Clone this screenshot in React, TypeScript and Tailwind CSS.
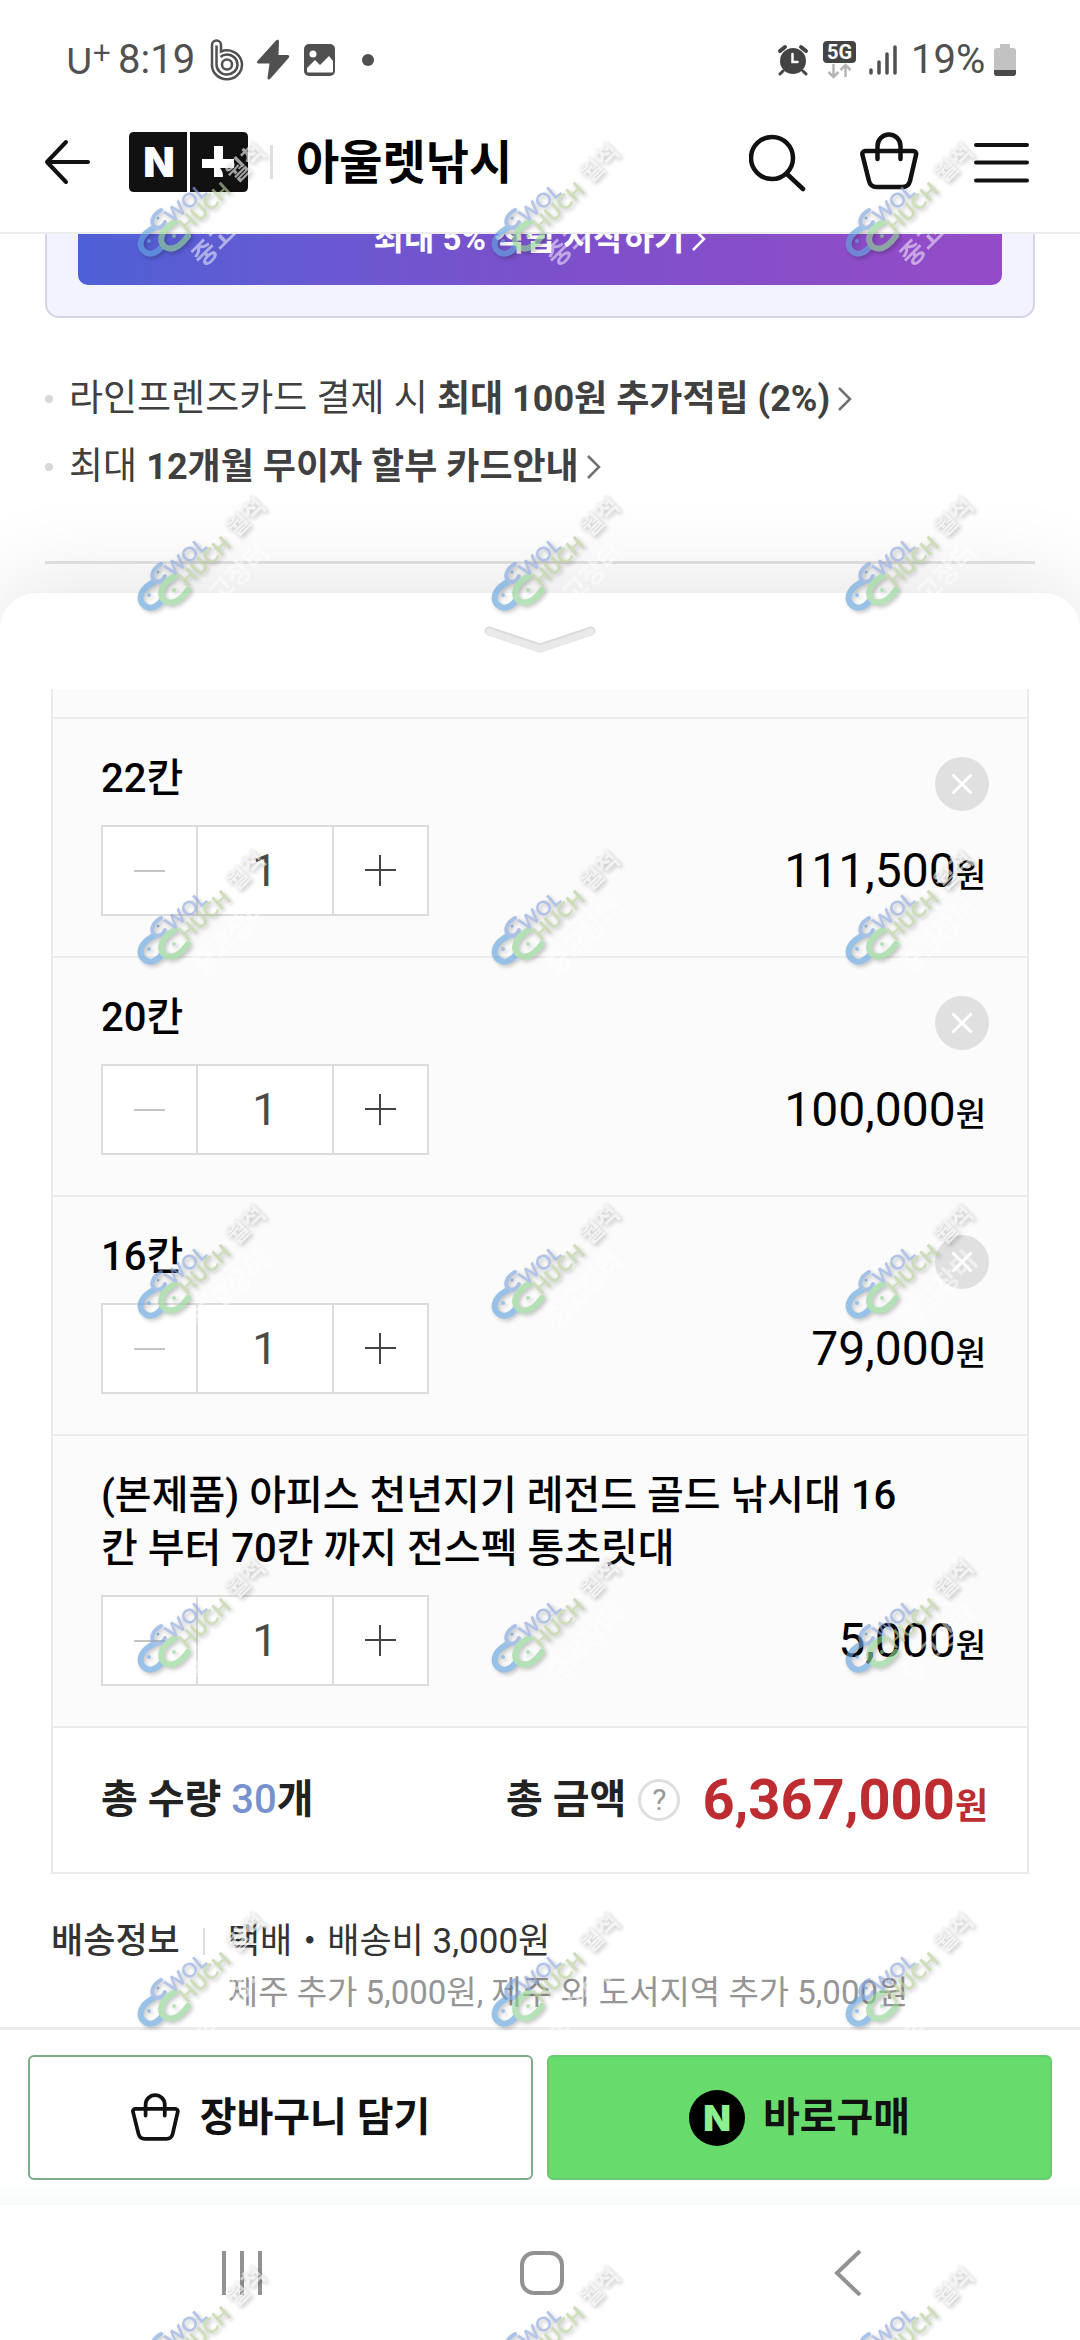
import React, { useState } from "react";

interface Item {
  name: string;
  price: string;
  removable: boolean;
}

const ITEMS: Item[] = [
  { name: "22칸", price: "111,500", removable: true },
  { name: "20칸", price: "100,000", removable: true },
  { name: "16칸", price: "79,000", removable: true },
  {
    name: "(본제품) 아피스 천년지기 레전드 골드 낚시대 16칸 부터 70칸 까지 전스펙 통초릿대",
    price: "5,000",
    removable: false,
  },
];

export default function App() {
  return (
    <div className="relative flex min-h-screen flex-col overflow-hidden bg-white font-[Roboto,'Noto_Sans_CJK_KR',sans-serif] text-black">
      <div className="relative z-10 border-b-2 border-[#ececec] bg-white">
        <StatusBar />
        <Header />
      </div>
      <Benefits />
      <OrderSheet />
      <BuyBar />
      <SystemNav />
      <Watermarks />
    </div>
  );
}

// ----------------- Status bar -----------------
const StatusBar = () => (
  <div className="flex h-[120px] items-center justify-between pr-[64px] pl-[66px] text-[40px] leading-none text-[#505050]">
    <div className="flex items-center">
      <span className="flex w-[52px] items-start font-[Lato,sans-serif] text-[36px]">
        U<span className="text-[32px] leading-[20px]">+</span>
      </span>
      <span className="w-[92px]">8:19</span>
      <svg className="h-[42px] w-[34px]" viewBox="0 0 34 42" fill="none" stroke="#505050" strokeWidth="2.500">
        <path d="M2 25V6a4.500 4.500 0 0 1 9 0v6.500A15 14.500 0 1 1 2 25z" />
        <path d="M6.500 25V6.500M6.500 25a10.500 10 0 1 0 10.500-9.500c-3 0-5 1-6.500 2.500" />
        <circle cx="17" cy="25.500" r="5" />
      </svg>
      <svg className="ml-[12px] h-[42px] w-[34px]" viewBox="0 0 34 42" fill="#505050">
        <path d="M20 1.500 1.500 22c-1 1.500-.5 2.500 1 2.500h11L11.500 39c0 2 2 2 3 .5L33 18.500c.8-1.500 0-2.500-1.500-2.500h-9L23 2.500C23 .5 21 .3 20 1.500z" />
      </svg>
      <svg className="ml-[14px] h-[34px] w-[32px]" viewBox="0 0 32 34">
        <rect x="0" y="1" width="31" height="32" rx="5" fill="#505050" />
        <circle cx="9" cy="11" r="3.500" fill="#fff" />
        <path d="M3 25l8-8 5 5 9-9 4 5v10q0 1.500-1.500 1.500h-23Q3 29.500 3 28z" fill="#fff" />
      </svg>
      <span className="ml-[26px] h-[12px] w-[12px] rounded-full bg-[#505050]" />
    </div>
    <div className="flex items-center">
      <svg className="h-[32px] w-[32px]" viewBox="0 0 32 32" fill="none" stroke="#444" strokeLinecap="round">
        <circle cx="16" cy="17" r="13" fill="#444" stroke="none" />
        <path d="M3 7l5-4M29 7l-5-4" strokeWidth="4" />
        <path d="M6 27l-3 3M26 27l3 3" strokeWidth="3" />
        <path d="M15.500 10v8h5" stroke="#fff" strokeWidth="2.500" />
      </svg>
      <svg className="ml-[14px] h-[40px] w-[34px]" viewBox="0 0 34 40">
        <rect x="0" y="1" width="33" height="22" rx="4" fill="#444" />
        <text x="16.500" y="19" textAnchor="middle" fill="#fff" fontFamily="Roboto" fontSize="20" fontWeight="700">
          5G
        </text>
        <path d="M10.500 24v13M5.500 32l5 5 5-5M22.500 37V25M17.500 30l5-5 5 5" fill="none" stroke="#b5b5b5" strokeWidth="2.500" />
      </svg>
      <svg className="ml-[12px] h-[32px] w-[28px]" viewBox="0 0 28 32" stroke="#505050" strokeWidth="3.500" strokeLinecap="round">
        <path d="M2 26v3M10 18v11M18 10v19M26 3v26" />
      </svg>
      <span className="ml-[14px] w-[83px]">19%</span>
      <svg className="h-[34px] w-[22px]" viewBox="0 0 22 34">
        <path d="M6 1h10v4h3q3 0 3 3v22q0 3-3 3H3q-3 0-3-3V8q0-3 3-3h3z" fill="#c2c2c2" />
        <path d="M0 27h22v3q0 3-3 3H3q-3 0-3-3z" fill="#4a4a4a" />
      </svg>
    </div>
  </div>
);

// ----------------- Store header -----------------
const Header = () => (
  <header className="flex h-[112px] items-center pr-[49px] pb-[28px] pl-[44px]">
    <button aria-label="뒤로">
      <svg className="h-[46px] w-[48px]" viewBox="0 0 48 46" fill="none" stroke="#111" strokeWidth="4" strokeLinecap="round" strokeLinejoin="round">
        <path d="M22 3 3 23l19 20M3 23h41" />
      </svg>
    </button>
    <a href="#store" aria-label="N+ 스토어" className="ml-[37px]">
      <svg className="h-[60px] w-[119px]" viewBox="0 0 119 60">
        <path d="M5 0h53v60H5q-5 0-5-5V5q0-5 5-5zM61 0h53q5 0 5 5v50q0 5-5 5H61z" fill="#111" />
        <text x="30" y="45" textAnchor="middle" fill="#fff" fontFamily="Inter" fontSize="41" fontWeight="900">
          N
        </text>
        <path d="M85 14h9v13h11v9H91q3 3 3 9h-9v-9H73v-9h12z" fill="#fff" />
      </svg>
    </a>
    <span className="ml-[22px] h-[34px] w-[3px] bg-[#dfdfdf]" />
    <h1 className="ml-[23px] text-[47px] leading-none font-bold">아울렛낚시</h1>
    <div className="ml-auto flex gap-[51px]">
      <button aria-label="검색">
        <svg className="h-[60px] w-[60px]" viewBox="0 0 60 60" fill="none" stroke="#111" strokeWidth="4.500" strokeLinecap="round">
          <circle cx="23" cy="26" r="21" />
          <path d="M38 42l16 15" />
        </svg>
      </button>
      <button aria-label="장바구니">
        <BasketIcon className="h-[60px] w-[60px]" />
      </button>
      <button aria-label="메뉴">
        <svg className="h-[60px] w-[60px]" viewBox="0 0 60 60" stroke="#111" strokeWidth="4" strokeLinecap="round">
          <path d="M5 13h51M5 30.500h51M5 48.500h51" />
        </svg>
      </button>
    </div>
  </header>
);

const BasketIcon = ({ className }: { className: string }) => (
  <svg className={className} viewBox="0 0 60 60" fill="none" stroke="#111" strokeWidth="4.500" strokeLinecap="round" strokeLinejoin="round">
    <path d="M5 19h48a3 3 0 0 1 3 4l-6 26q-1.500 6-7.500 6h-26q-6 0-7.500-6L2.500 23a3 3 0 0 1 2.500-4z" />
    <path d="M17.500 27V14a11.500 11.500 0 0 1 23 0v13" />
  </svg>
);

const Chevron = ({ className }: { className: string }) => (
  <svg className={className} viewBox="0 0 14 24" fill="none" stroke="currentColor" strokeWidth="2.500">
    <path d="M1 1l11 11L1 23" />
  </svg>
);

// ----------------- Card benefits, scrolled under the header -----------------
const Benefits = () => (
  <section className="px-[45px] pb-[29px] text-[#404040]">
    <div className="-mt-[61px] rounded-[14px] border-2 border-[#d3d5e2] bg-[#f2f3fe] px-[31px] pb-[31px]">
      <button className="flex h-[110px] w-full items-center justify-center gap-[8px] rounded-[10px] bg-linear-to-r from-[#4e60d6] via-[#7b50cb] to-[#954bc7] pt-[18px] text-[33px] font-bold text-white">
        최대 5% 적립 시작하기
        <Chevron className="h-[24px] w-[14px]" />
      </button>
    </div>
    <ul className="mt-[47px] leading-[67px]">
      <li className="flex items-center">
        <span className="mr-[16px] h-[8px] w-[8px] rounded-full bg-[#d8d8d8]" />
        <a href="#card" className="flex items-center gap-[8px]">
          <span className="text-[37px]">
            라인프렌즈카드 결제 시 <b className="text-[36px]">최대 100원 추가적립 (2%)</b>
          </span>
          <Chevron className="h-[24px] w-[14px] text-[#707070]" />
        </a>
      </li>
      <li className="flex items-center">
        <span className="mr-[16px] h-[8px] w-[8px] rounded-full bg-[#d8d8d8]" />
        <a href="#installment" className="flex items-center gap-[8px]">
          <span className="text-[37px]">
            최대 <b className="text-[36px]">12개월 무이자 할부 카드안내</b>
          </span>
          <Chevron className="h-[24px] w-[14px] text-[#707070]" />
        </a>
      </li>
    </ul>
    <hr className="mt-[60px] border-t-3 border-[#e4e4e4]" />
  </section>
);

// ----------------- Order sheet -----------------
const OrderSheet = () => (
  <section className="relative flex-1 rounded-t-[36px] bg-white px-[51px] shadow-[0_0_100px_rgba(0,0,0,0.13)]">
    <button aria-label="접기" className="mx-auto block pt-[33px]">
      <svg className="h-[30px] w-[112px]" viewBox="0 0 112 30" fill="none" strokeLinecap="round" strokeLinejoin="round">
        <path d="M5 5l51 17 51-17" stroke="#dcdcdc" strokeWidth="9" />
        <path d="M5 6l51 17 51-17" stroke="#e9e9e9" strokeWidth="7" />
      </svg>
    </button>
    <div className="mt-[33px] border-2 border-t-0 border-[#ebebeb]">
      <div className="h-[28px] bg-[#fbfbfb]" />
      {ITEMS.map((item) => (
        <ItemRow key={item.name} item={item} />
      ))}
      <div className="flex h-[146px] items-center justify-between border-t-2 border-[#ebebeb] pr-[39px] pl-[48px] text-[40px] leading-none font-bold text-[#222]">
        <span>
          총 수량 <span className="font-medium text-[#7891cf]">30</span>개
        </span>
        <span className="flex items-center">
          총 금액
          <button aria-label="총 금액 안내" className="ml-[12px] h-[42px] w-[42px] rounded-full border-3 border-[#dedede] text-[30px] leading-none font-normal text-[#999]">
            ?
          </button>
          <span className="ml-[22px] text-[56px] font-bold text-[#bd2c30]">
            6,367,000<span className="text-[36px]">원</span>
          </span>
        </span>
      </div>
    </div>
    <div className="flex items-start pt-[42px] pb-[9px] text-[35px] leading-[51px] text-[#333]">
      <span className="font-medium">배송정보</span>
      <span className="mx-[23px] mt-[12px] h-[27px] w-[2px] bg-[#dcdcdc]" />
      <div>
        <p>택배・배송비 3,000원</p>
        <p className="text-[33px] text-[#959595]">제주 추가 5,000원, 제주 외 도서지역 추가 5,000원</p>
      </div>
    </div>
  </section>
);

const ItemRow = ({ item }: { item: Item }) => {
  const [count, setCount] = useState(1);

  return (
    <div className="border-t-2 border-[#ebebeb] bg-[#fbfbfb] pt-[33px] pr-[38px] pb-[40px] pl-[48px]">
      <div className="flex items-start justify-between gap-[20px]">
        <p className="text-[40px] leading-[53px] font-medium">{item.name}</p>
        <div className="h-[53px] w-[54px] shrink-0 pt-[5px]">
          {item.removable && (
            <button aria-label="삭제" className="flex h-[54px] w-[54px] items-center justify-center rounded-full bg-[#e0e0e0]">
              <svg className="h-[22px] w-[22px]" viewBox="0 0 22 22" stroke="#fff" strokeWidth="3">
                <path d="M1.500 1.500l19 19M20.500 1.500l-19 19" />
              </svg>
            </button>
          )}
        </div>
      </div>
      <div className="mt-[20px] flex items-center justify-between">
        <div className="flex h-[91px] border-2 border-[#dcdcdc] bg-white">
          <button aria-label="수량 빼기" onClick={() => setCount(Math.max(1, count - 1))} className="flex w-[93px] items-center justify-center">
            <span className="h-[2px] w-[31px] bg-[#c4c4c4]" />
          </button>
          <input
            aria-label={`${item.name} 수량`}
            value={count}
            readOnly
            className="w-[138px] border-x-2 border-[#dcdcdc] text-center text-[45px] text-[#4a4a4a]"
          />
          <button aria-label="수량 더하기" onClick={() => setCount(count + 1)} className="flex w-[93px] items-center justify-center">
            <svg className="h-[32px] w-[32px]" viewBox="0 0 32 32" stroke="#444" strokeWidth="2">
              <path d="M0 15h31M15 0v31" />
            </svg>
          </button>
        </div>
        <span className="pr-[3px] text-[48px] leading-none">
          {item.price}
          <span className="text-[33px] font-medium">원</span>
        </span>
      </div>
    </div>
  );
};

// ----------------- Cart / buy buttons -----------------
const BuyBar = () => (
  <div className="relative flex gap-[14px] border-t-3 border-[#ebebeb] bg-linear-to-b from-white from-85% to-[#f8fafa] px-[28px] pt-[25px] pb-[25px] text-[40px] leading-none font-bold text-[#111]">
    <button className="flex h-[125px] flex-1 items-center justify-center gap-[19px] rounded-[6px] border-2 border-[#7dac87] bg-white">
      <BasketIcon className="h-[50px] w-[50px]" />
      장바구니 담기
    </button>
    <button className="flex h-[125px] flex-1 items-center justify-center gap-[18px] rounded-[6px] border-2 border-[#68cb70] bg-[#67dc6d]">
      <svg className="h-[56px] w-[56px]" viewBox="0 0 56 56">
        <circle cx="28" cy="28" r="28" fill="#000" />
        <text x="28" y="41" textAnchor="middle" fill="#8df08f" fontFamily="Inter" fontSize="36" fontWeight="900">
          N
        </text>
      </svg>
      바로구매
    </button>
  </div>
);

const SystemNav = () => (
  <nav className="flex h-[135px] items-center justify-between bg-white pr-[217px] pl-[221px]">
    <button aria-label="최근 앱">
      <svg className="h-[46px] w-[44px]" viewBox="0 0 44 46" stroke="#929292" strokeWidth="4">
        <path d="M3 1v44M21 1v44M39 1v44" />
      </svg>
    </button>
    <button aria-label="홈">
      <svg className="h-[46px] w-[46px]" viewBox="0 0 46 46" fill="none" stroke="#929292" strokeWidth="4">
        <rect x="3" y="3" width="40" height="40" rx="12" />
      </svg>
    </button>
    <button aria-label="뒤로 가기">
      <svg className="h-[46px] w-[44px]" viewBox="0 0 44 46" fill="none" stroke="#929292" strokeWidth="4">
        <path d="M41 1 18 23l23 22" />
      </svg>
    </button>
  </nav>
);

// ----------------- Repeated site mark laid over the page -----------------
const Watermarks = () => (
  <div aria-hidden="true" className="pointer-events-none absolute inset-0 z-20 flex flex-wrap content-start overflow-hidden">
    {Array.from({ length: 21 }, (_, i) => (
      <svg key={i} className="h-[354px] w-[354px]" viewBox="0 0 354 354" fill="none" strokeLinecap="round">
        <g style={{ filter: "drop-shadow(2px 2px 2px rgba(0,0,0,0.35))" }} opacity="0.65">
          <path d="M154 228c-11 5-16 14-12 21 6 8 15 5 21-4" stroke="#63a3dc" strokeWidth="6" />
          <path d="M161 210c-9 5-11 13-6 17 4 2 8 0 10-5" stroke="#7da3dc" strokeWidth="4" />
          <path d="M175 222c-13 7-18 18-10 25 7 4 15 0 23-11" stroke="#8fd392" strokeWidth="6" />
          <circle cx="149" cy="241" r="2" fill="#63a3dc" />
          <circle cx="158" cy="218" r="1.500" fill="#4a85b8" />
          <circle cx="174" cy="236" r="2" fill="#8fd392" />
          <text transform="translate(172 224) rotate(-40)" fontFamily="Lato" fontSize="20" fontWeight="700" fill="#8ba6dd">
            WOL
          </text>
          <text transform="translate(187 234) rotate(-43)" fontFamily="Lato" fontSize="21" fontWeight="700" fill="#b3cd95">
            HUCH
          </text>
          <text transform="translate(236 184) rotate(-45)" fontFamily="Noto Sans CJK KR" fontSize="24" fontWeight="700" fill="#efefef">
            월척
          </text>
        </g>
        <text transform="translate(203 268) rotate(-45)" fontFamily="Noto Sans CJK KR" fontSize="26" fontWeight="700" fill="#fff" opacity="0.5">
          중고장터
        </text>
      </svg>
    ))}
  </div>
);
